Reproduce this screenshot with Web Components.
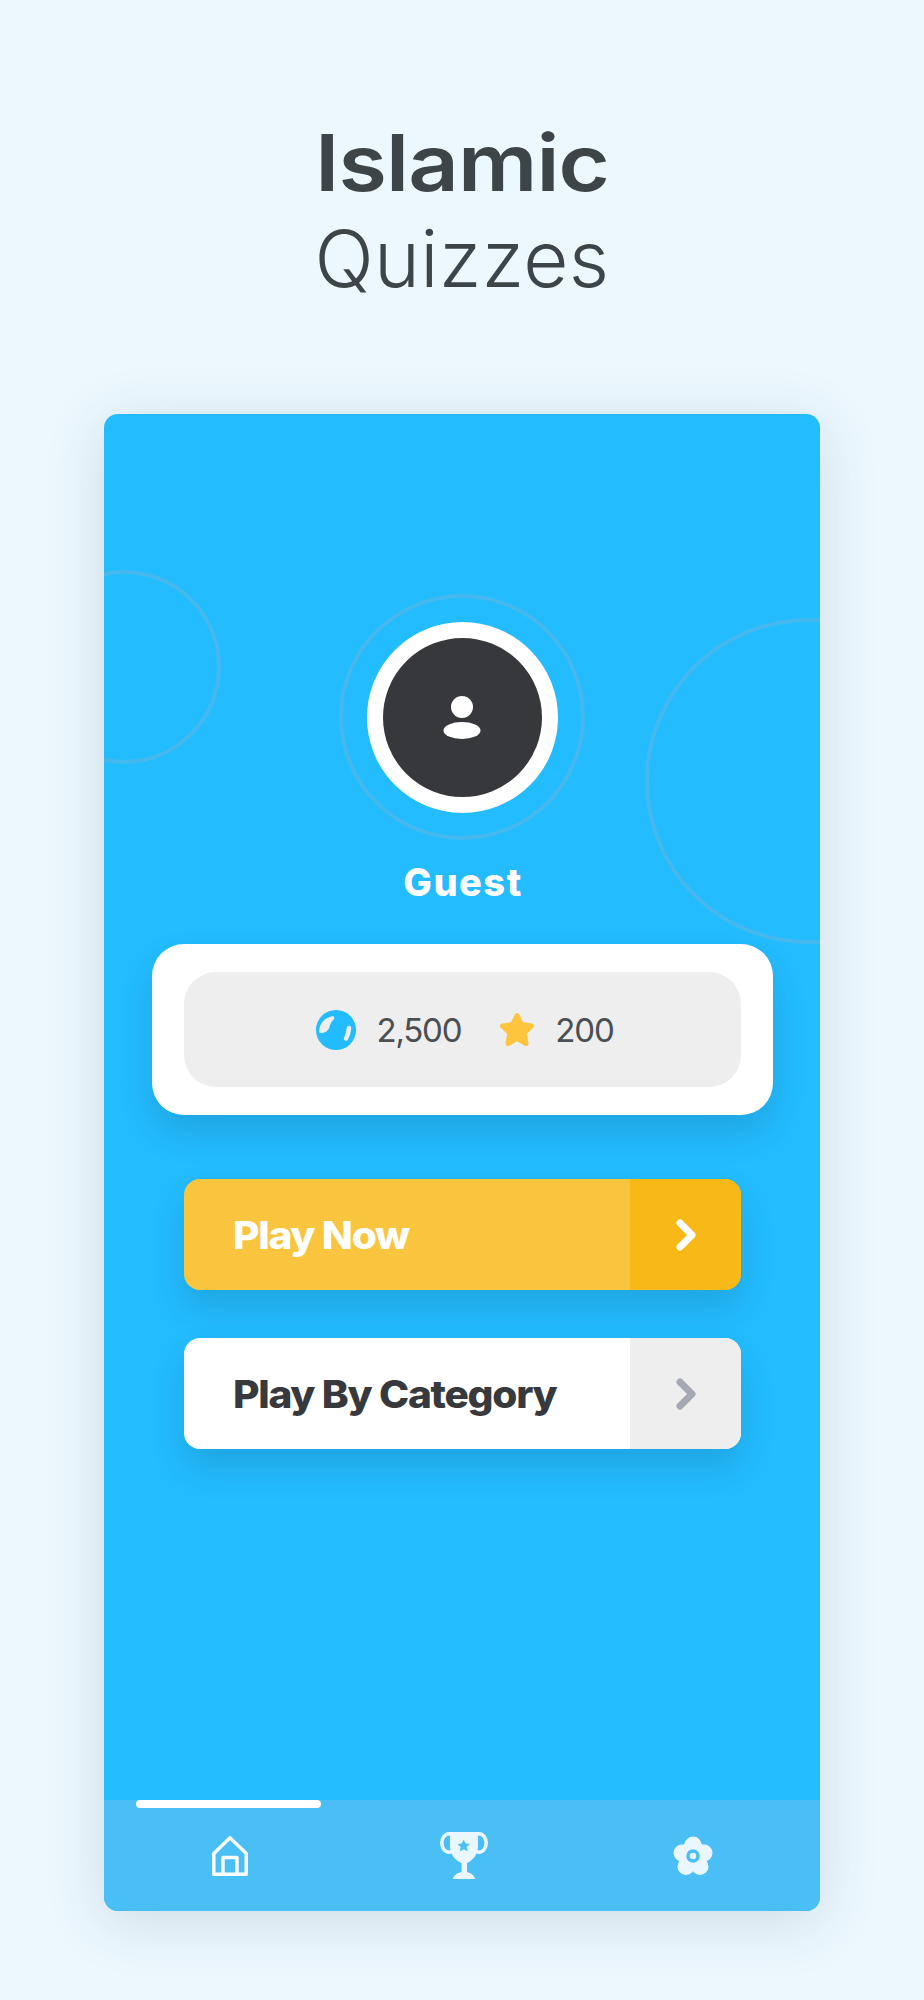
<!DOCTYPE html>
<html lang="en">
<head>
<meta charset="utf-8">
<title>Islamic Quizzes</title>
<style>
  html, body { margin: 0; padding: 0; background: #ecf8fe; }
  body { font-family: Inter, "Liberation Sans", sans-serif; height: 2000px; overflow: hidden; }
</style>
</head>
<body>
<quiz-page>
  <quiz-title strong="Islamic" light="Quizzes"></quiz-title>
  <phone-card>
    <profile-badge name="Guest"></profile-badge>
    <stats-card>
      <stat-item kind="coin" value="2,500"></stat-item>
      <stat-item kind="star" value="200"></stat-item>
    </stats-card>
    <action-button tone="gold" label="Play Now"></action-button>
    <action-button tone="white" label="Play By Category"></action-button>
    <tab-bar slot="nav">
      <tab-icon kind="home"></tab-icon>
      <tab-icon kind="trophy"></tab-icon>
      <tab-icon kind="gear"></tab-icon>
    </tab-bar>
  </phone-card>
</quiz-page>
<script>
function def(name, html) {
  customElements.define(name, class extends HTMLElement {
    constructor() {
      super();
      const root = this.attachShadow({ mode: 'open' });
      const get = k => this.getAttribute(k) || '';
      root.innerHTML = html(get);
    }
  });
}
const FONT = 'Inter, "Liberation Sans", sans-serif';

def('quiz-page', () => `<style>:host{display:block;width:924px}</style><slot></slot>`);

def('quiz-title', get => `<style>
  :host{display:flex;flex-direction:column;align-items:center;height:414px;box-sizing:border-box;padding-top:115px;
    font-family:${FONT};color:#3d4548;font-size:78px;line-height:96px}
  .s{font-weight:600;letter-spacing:-.8px;transform:scaleX(1.13)}
  .l{font-weight:300;letter-spacing:.4px}
</style><div class="s">${get('strong')}</div><div class="l">${get('light')}</div>`);

def('phone-card', () => `<style>
  :host{display:block;width:716px;height:1497px;margin:0 auto;border-radius:14px;
    box-shadow:0 10px 60px rgba(30,60,80,.15)}
  .clip{position:relative;height:100%;border-radius:14px;overflow:hidden;background:#23bcff;display:flex;flex-direction:column}
  .main{flex:1;display:flex;flex-direction:column;align-items:center;padding-top:180px;position:relative}
  .deco{position:absolute;border:4px solid #45b9ee;border-radius:50%;box-sizing:border-box}
  .a{width:194px;height:194px;left:-77px;top:156px}
  .b{width:326px;height:326px;left:541px;top:204px}
  .content{position:relative;display:flex;flex-direction:column;align-items:center}
</style>
<div class="clip">
  <div class="main">
    <div class="deco a"></div><div class="deco b"></div>
    <div class="content"><slot></slot></div>
  </div>
  <slot name="nav"></slot>
</div>`);

def('profile-badge', get => `<style>
  :host{display:flex;flex-direction:column;align-items:center;font-family:${FONT}}
  .ring{width:246px;height:246px;box-sizing:border-box;border:4px solid #45b9ee;border-radius:50%;display:flex;align-items:center;justify-content:center}
  .av{width:191px;height:191px;box-sizing:border-box;border:16px solid #fff;border-radius:50%;background:#37383b;display:flex;align-items:center;justify-content:center}
  svg{display:block}
  .name{margin-top:22px;height:40px;line-height:40px;font-size:38px;font-weight:800;color:#fff;letter-spacing:1.500px;padding-left:2px}
</style>
<div class="ring"><div class="av">
  <svg width="38" height="43" viewBox="0 0 38 43"><circle cx="19" cy="11" r="11" fill="#fff"/><ellipse cx="19" cy="34.500" rx="18.500" ry="8.500" fill="#fff"/></svg>
</div></div>
<div class="name">${get('name')}</div>`);

def('stats-card', () => `<style>
  :host{display:block;margin-top:42px;width:621px;height:171px;box-sizing:border-box;padding:28px 32px;background:#fff;border-radius:32px;
    box-shadow:0 18px 36px rgba(0,0,0,.12)}
  .in{height:115px;background:#eee;border-radius:32px;display:flex;align-items:center;justify-content:center;gap:38px;padding-left:6px}
</style><div class="in"><slot></slot></div>`);

const statIcons = {
  coin: `<svg width="40" height="40" viewBox="0 0 40 40"><circle cx="20" cy="20" r="20" fill="#23bcff"/>
    <path d="M17.500 6C9 7 3 13.500 3 22.500C7 24 12 22 13.500 17C14.500 13 16 11 18.500 8.500Z" fill="#eee"/>
    <path d="M33 18Q32.500 24 30 28.500" fill="none" stroke="#eee" stroke-width="4.500" stroke-linecap="round"/></svg>`,
  star: `<svg width="36" height="36" viewBox="0 0 36 36"><path d="M18 3.500L22.400 12.600L32.500 14L25.200 21L27 31.500L18 26.600L9 31.500L10.800 21L3.500 14L13.600 12.600Z" fill="#fcc53d" stroke="#fcc53d" stroke-width="5" stroke-linejoin="round"/></svg>`
};
def('stat-item', get => `<style>
  :host{display:flex;align-items:center;gap:20px;font-family:${FONT};font-size:33px;font-weight:400;color:#4b4e53;letter-spacing:-1.200px}
  svg{display:block}
</style>${statIcons[get('kind')]}<span>${get('value')}</span>`);

def('action-button', get => {
  const gold = get('tone') === 'gold';
  return `<style>
  :host{display:flex;width:557px;height:111px;border-radius:16px;margin-top:${gold ? 64 : 48}px;overflow:hidden;
    background:${gold ? '#f9c53f' : '#fff'};font-family:${FONT};box-shadow:0 18px 36px rgba(0,0,0,.12)}
  .t{flex:1;display:flex;align-items:center;padding-left:49px;font-size:38px;font-weight:800;letter-spacing:-1.200px;color:${gold ? '#fff' : '#38393c'}}
  .t span{display:inline-block;transform:scaleX(1.07);transform-origin:left center}
  .c{width:111px;display:flex;align-items:center;justify-content:center;background:${gold ? '#f8b918' : '#eee'}}
  svg{display:block;margin-left:2px}
</style><div class="t"><span>${get('label')}</span></div>
<div class="c"><svg width="22" height="34" viewBox="0 0 22 34"><path d="M5 5L17 17L5 29" fill="none" stroke="${gold ? '#fff' : '#a6a9b2'}" stroke-width="7" stroke-linecap="round" stroke-linejoin="round"/></svg></div>`;
});

def('tab-bar', () => `<style>
  :host{display:grid;grid-template-columns:252px 216px 242px;height:111px;background:#49bff6;position:relative;align-items:center;justify-items:center}
  .bar{position:absolute;left:32px;top:0;width:185px;height:8px;border-radius:4px;background:#fff}
</style><div class="bar"></div><slot></slot>`);

const tabIcons = {
  home: `<svg width="36" height="40" viewBox="0 0 36 40" fill="none" stroke="#fff" stroke-width="3.400" stroke-linejoin="round"><path d="M1.800 17.500L18 1.800L34.200 17.500V38.200H1.800Z"/><path d="M11 38V21.500H25V38"/></svg>`,
  trophy: `<svg width="48" height="47" viewBox="0 0 48 47"><g fill="none" stroke="#ebf7ff" stroke-width="3.600"><ellipse cx="9" cy="11" rx="7.200" ry="9.200"/><ellipse cx="39" cy="11" rx="7.200" ry="9.200"/></g>
    <path d="M10 0H38V14C38 23 32 29 27 31V40C31 41 34 43 35 47H13C14 43 17 41 21.500 40V31C16 29 10 23 10 14Z" fill="#ebf7ff"/>
    <path d="M23.700 7.500L25.600 11.600L30 12.100L26.700 15.100L27.700 19.500L23.700 17.300L19.800 19.500L20.700 15.100L17.400 12.100L21.800 11.600Z" fill="#49bff6"/></svg>`,
  gear: `<svg width="40" height="40" viewBox="0 0 40 40"><g fill="#ebf7ff"><circle cx="20" cy="20" r="15"/><circle cx="20" cy="9" r="8.500"/><circle cx="31" cy="17" r="8.500"/><circle cx="27" cy="30.500" r="8.500"/><circle cx="13" cy="30.500" r="8.500"/><circle cx="9" cy="17" r="8.500"/></g><circle cx="20" cy="20" r="5" fill="none" stroke="#49bff6" stroke-width="3.500"/></svg>`
};
def('tab-icon', get => `<style>:host{display:flex}svg{display:block}</style>${tabIcons[get('kind')]}`);
</script>
</body>
</html>
